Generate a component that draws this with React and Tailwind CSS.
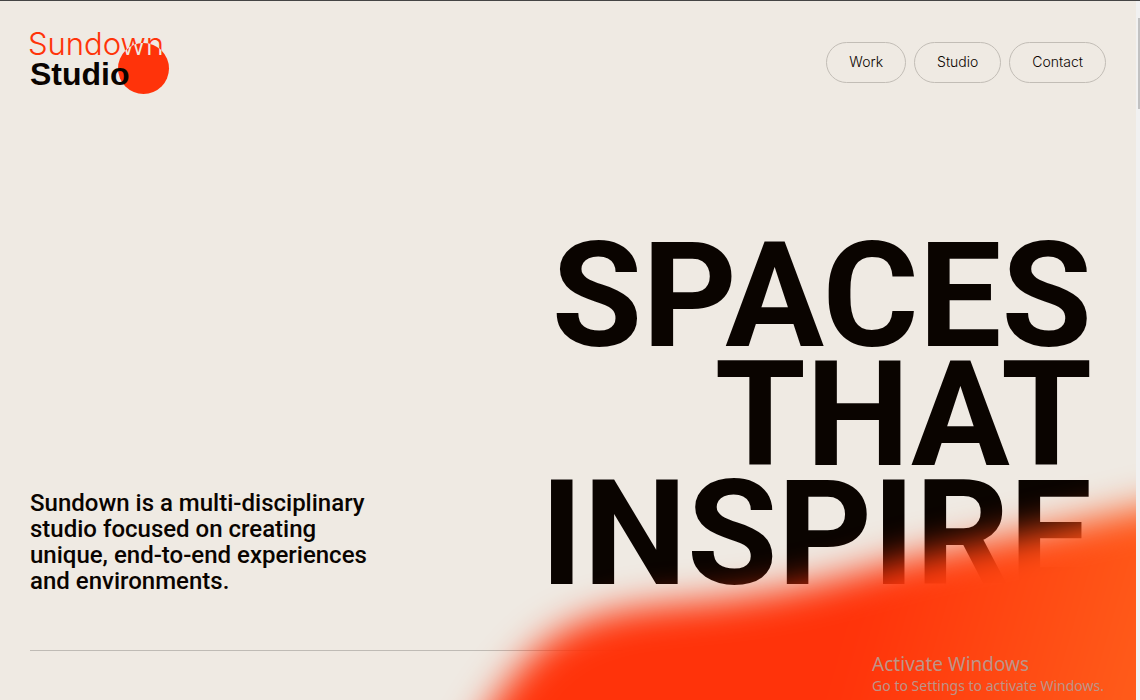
const links = ['Work', 'Studio', 'Contact'];

function Logo() {
  return (
    <a href="#home" aria-label="Sundown Studio">
      <svg className="overflow-visible" width="144" height="68" viewBox="0 0 144 68" aria-hidden="true">
        <defs>
          <radialGradient id="word-fill" gradientUnits="userSpaceOnUse" cx="115.5" cy="39.5" r="26">
            <stop offset="0.97" stopColor="#efeae3" />
            <stop offset="1" stopColor="#ff330a" />
          </radialGradient>
        </defs>
        <circle cx="115.5" cy="39.5" r="25.5" fill="#ff330a" />
        <text x="0" y="26" fill="url(#word-fill)" fontFamily="Inter, sans-serif" fontSize="31" fontWeight="300">
          Sundown
        </text>
        <text x="2" y="56" fill="#0a0400" fontFamily="Liberation Sans, sans-serif" fontSize="32" fontWeight="700">
          Studio
        </text>
      </svg>
    </a>
  );
}

function Glow() {
  return (
    <svg
      className="pointer-events-none absolute right-0 bottom-0"
      width="736"
      height="300"
      viewBox="400 400 736 300"
      aria-hidden="true"
    >
      <defs>
        <linearGradient id="glow-fill" gradientUnits="userSpaceOnUse" x1="860" y1="610" x2="1140" y2="690">
          <stop offset="0" stopColor="#ff330a" />
          <stop offset="1" stopColor="#ff5c1a" />
        </linearGradient>
        <filter
          id="glow-soft"
          filterUnits="userSpaceOnUse"
          colorInterpolationFilters="sRGB"
          x="200"
          y="200"
          width="1300"
          height="900"
        >
          <feGaussianBlur stdDeviation="18" />
        </filter>
      </defs>
      <path
        d="M420 860C450 770 486 706 528 660C572 612 630 608 700 602C790 593 840 578 900 561C980 541 1050 530 1136 509L1300 473V860Z"
        fill="url(#glow-fill)"
        filter="url(#glow-soft)"
      />
    </svg>
  );
}

export default function App() {
  return (
    <div className="flex min-h-screen border-t border-[#454545] bg-[#efeae3] text-[#0a0400]">
      <div className="relative flex min-w-0 flex-1 flex-col overflow-hidden">
        <header className="flex items-start justify-between pt-7 pr-[30px] pl-7">
          <Logo />
          <nav className="flex gap-2 pt-[13px]">
            {links.map((label) => (
              <a
                key={label}
                href={`#${label.toLowerCase()}`}
                className="rounded-full border border-[#c2bdb6] px-[22px] pt-2 pb-[10px] font-['Inter',sans-serif] text-[14px] leading-[21px] font-light text-[#0a0400]"
              >
                {label}
              </a>
            ))}
          </nav>
        </header>
        <main className="flex flex-1 items-end justify-between px-[30px] pb-14 font-['Roboto',sans-serif]">
          <p className="text-[24px] leading-[26px] font-medium">
            Sundown is a multi-disciplinary
            <br />
            studio focused on creating
            <br />
            unique, end-to-end experiences
            <br />
            and environments.
          </p>
          <h1 className="pr-[14px] text-right text-[147px] leading-[119px] font-bold">
            SPACES
            <br />
            THAT
            <br />
            INSPIRE
          </h1>
        </main>
        <hr className="mx-[30px] mb-[49px] border-[#bfbbb5]" />
        <Glow />
        <div className="absolute right-8 bottom-1 font-['Noto_Sans',sans-serif] text-[#bd9488]">
          <p className="text-[19px] leading-6">Activate Windows</p>
          <p className="text-[14px] leading-5">Go to Settings to activate Windows.</p>
        </div>
      </div>
      <div className="w-1 bg-[#f1f1f1] pt-[17px] pl-0.5" aria-hidden="true">
        <div className="h-[91px] bg-[#c1c1c1]" />
      </div>
    </div>
  );
}
